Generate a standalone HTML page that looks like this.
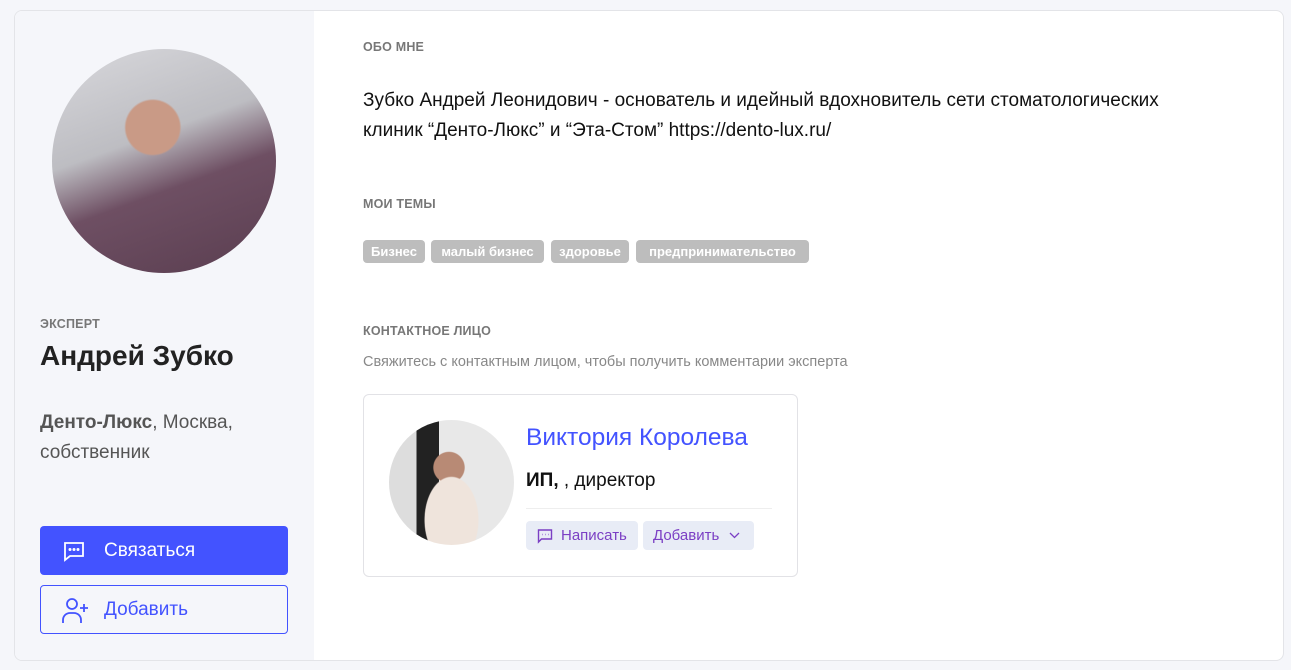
<!DOCTYPE html>
<html><head><meta charset="utf-8"><style>
*{box-sizing:border-box;margin:0;padding:0}
body{width:1291px;height:670px;background:#f5f6fa;font-family:"Liberation Sans",sans-serif;position:relative;overflow:hidden}
.card{position:absolute;left:14px;top:10px;width:1270px;height:651px;background:#fff;border:1px solid #e3e4e8;border-radius:8px;overflow:hidden}
.left{position:absolute;left:0;top:0;width:299px;height:100%;background:#f5f6fa}
.abs{position:absolute}
.av{left:37px;top:38px;width:224px;height:224px;border-radius:50%;background:radial-gradient(circle at 45% 35%,#c99a86 0 14%,transparent 15%),linear-gradient(160deg,#d8d8dc 0%,#bdbdc2 40%,#6e4f63 60%,#5a3e50 100%)}
.lbl{font-size:12.5px;font-weight:bold;color:#777;letter-spacing:.2px}
.btn{left:25px;width:248px;height:49px;border-radius:4px;font-size:19px;display:flex;align-items:center}
.tag{position:absolute;top:229px;height:23px;background:#bdbdbd;color:#fff;font-weight:bold;font-size:13px;border-radius:4px;line-height:23px;text-align:center}
.cc{left:348px;top:383px;width:435px;height:183px;border:1px solid #e2e2e6;border-radius:6px}
.sb{position:absolute;top:126px;height:29px;background:#e8ecf6;border-radius:4px;color:#7b3fc4;font-size:15px;line-height:29px}
</style></head><body>
<div class="card">
<div class="left">
<div class="abs av"></div>
<div class="abs lbl" style="left:25px;top:306px">ЭКСПЕРТ</div>
<div class="abs" style="left:25px;top:329px;font-size:28px;font-weight:bold;color:#222">Андрей Зубко</div>
<div class="abs" style="left:25px;top:397px;font-size:19px;color:#555;line-height:30px"><b>Денто-Люкс</b>, Москва,<br>собственник</div>
<div class="abs btn" style="top:515px;background:#4353ff;color:#fff"><svg style="margin-left:22px;margin-right:18px" width="24" height="24" viewBox="0 0 24 24" fill="none" stroke="#fff" stroke-width="1.8"><path d="M3 4h18v13H8l-5 4z"/><circle cx="8" cy="10.5" r=".6" fill="#fff"/><circle cx="12" cy="10.5" r=".6" fill="#fff"/><circle cx="16" cy="10.5" r=".6" fill="#fff"/></svg>Связаться</div>
<div class="abs btn" style="top:574px;border:1px solid #4353ff;color:#4353ff;background:#f5f6fa"><svg style="margin-left:20px;margin-right:15px" width="28" height="28" viewBox="0 0 28 28" fill="none" stroke="#4353ff" stroke-width="1.8"><circle cx="11" cy="8" r="5"/><path d="M2 27v-3a7 7 0 0 1 7-7h4a7 7 0 0 1 7 7v3M23 8v8M19 12h8"/></svg>Добавить</div>
</div>
<div class="abs lbl" style="left:348px;top:29px">ОБО МНЕ</div>
<div class="abs" style="left:348px;top:75px;font-size:19px;line-height:30px;color:#111;width:860px">Зубко Андрей Леонидович - основатель и идейный вдохновитель сети стоматологических клиник “Денто-Люкс” и “Эта-Стом” https://dento-lux.ru/</div>
<div class="abs lbl" style="left:348px;top:186px">МОИ ТЕМЫ</div>
<div class="tag" style="left:348px;width:62px">Бизнес</div>
<div class="tag" style="left:416px;width:113px">малый бизнес</div>
<div class="tag" style="left:536px;width:78px">здоровье</div>
<div class="tag" style="left:621px;width:173px">предпринимательство</div>
<div class="abs lbl" style="left:348px;top:313px">КОНТАКТНОЕ ЛИЦО</div>
<div class="abs" style="left:348px;top:343px;font-size:14.5px;color:#888">Свяжитесь с контактным лицом, чтобы получить комментарии эксперта</div>
<div class="abs cc">
<div class="abs" style="left:25px;top:25px;width:125px;height:125px;border-radius:50%;background:radial-gradient(ellipse at 50% 80%,#efe4dc 0 30%,transparent 31%),radial-gradient(circle at 48% 38%,#b88a75 0 15%,transparent 16%),linear-gradient(90deg,#ddd 0 22%,#222 22% 40%,#e8e8e8 40%)"></div>
<div class="abs" style="left:162px;top:29px;font-size:24.5px;color:#4353ff">Виктория Королева</div>
<div class="abs" style="left:162px;top:75px;font-size:19px;color:#111"><b>ИП,</b> , директор</div>
<div class="abs" style="left:162px;top:113px;width:246px;border-top:1px solid #eee"></div>
<div class="sb" style="left:162px;width:112px"><svg style="position:absolute;left:11px;top:7px" width="16" height="16" viewBox="0 0 16 16" fill="none" stroke="#7b3fc4" stroke-width="1.4"><path d="M1.5 2h13v9h-10l-3 3z"/><path d="M5 6.5h.5M8 6.5h.5M11 6.5h.5"/></svg><span style="position:absolute;left:35px">Написать</span></div>
<div class="sb" style="left:279px;width:111px"><span style="position:absolute;left:10px">Добавить</span><svg style="position:absolute;left:86px;top:11px" width="11" height="7" viewBox="0 0 11 7" fill="none" stroke="#7b3fc4" stroke-width="1.3"><path d="M1 1l4.5 4.5L10 1"/></svg></div>
</div>
</div>
</body></html>
